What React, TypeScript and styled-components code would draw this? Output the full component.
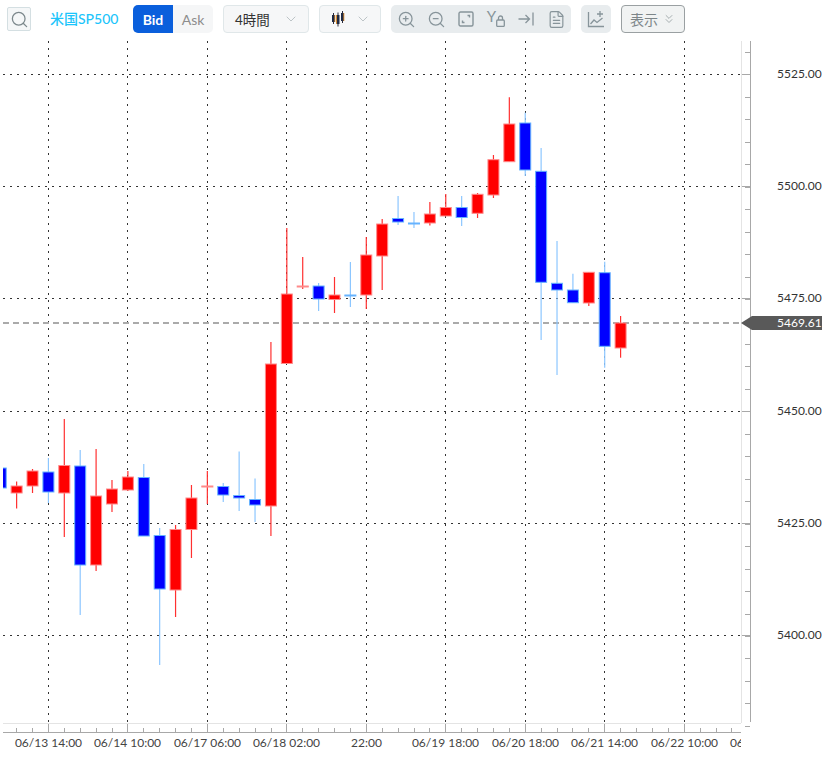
import styled, { createGlobalStyle } from "styled-components";
import { ChevronDown, ChevronsDown, FileText, Search, ZoomIn, ZoomOut } from "lucide-react";

const GlobalStyle = createGlobalStyle`
  html, body {
    margin: 0;
    padding: 0;
    background: #fff;
    font-family: Lato, "Noto Sans CJK JP", sans-serif;
  }
`;

const Page = styled.div`
  width: 824px;
  height: 757px;
  overflow: hidden;
  display: flex;
  flex-direction: column;
`;

const Toolbar = styled.div`
  height: 40px;
  flex: none;
  box-sizing: border-box;
  padding: 5px 0 0 7px;
  display: flex;
  align-items: flex-start;
  color: #8a9599;
`;

const SearchButton = styled.div`
  width: 24px;
  height: 24px;
  margin-top: 2px;
  box-sizing: border-box;
  border: 1px solid #d4dfe2;
  border-radius: 2px;
  background: #f5f7f8;
  display: flex;
  align-items: center;
  justify-content: center;
  color: #7c888c;
`;

const Title = styled.div`
  width: 83px;
  margin-left: 19px;
  height: 28px;
  line-height: 28px;
  font-size: 14px;
  font-weight: 500;
  color: #1cc5fb;
  white-space: nowrap;
`;

const Segment = styled.div`
  display: flex;
  width: 80px;
  height: 28px;
  border-radius: 5px;
  overflow: hidden;
  background: #f5f6f7;
`;

const SegmentItem = styled.div<{ $active?: boolean }>`
  width: 40px;
  display: flex;
  align-items: center;
  justify-content: center;
  font-size: 14px;
  font-weight: ${(p) => (p.$active ? 700 : 400)};
  background: ${(p) => (p.$active ? "#0a5fdc" : "transparent")};
  color: ${(p) => (p.$active ? "#fff" : "#8d8d8d")};
`;

const Select = styled.div<{ $width: number }>`
  width: ${(p) => p.$width}px;
  height: 28px;
  margin-left: 10px;
  box-sizing: border-box;
  padding: 0 9px 0 11px;
  border: 1px solid #e0e7e9;
  border-radius: 4px;
  background: #f6f7f8;
  display: flex;
  align-items: center;
  justify-content: space-between;
  font-size: 13.5px;
  color: #333;
  svg.chevron {
    color: #b4bcbf;
  }
`;

const IconGroup = styled.div`
  height: 28px;
  margin-left: 10px;
  border-radius: 5px;
  background: #e8ecee;
  display: flex;
`;

const IconButton = styled.div`
  width: 30px;
  height: 28px;
  display: flex;
  align-items: center;
  justify-content: center;
  color: #87949a;
`;

const AxisLetter = styled.span`
  font-size: 15px;
  line-height: 15px;
  margin-bottom: 5px;
`;

const LockSvg = styled.svg`
  margin-top: 3px;
`;

const ShowButton = styled.div`
  width: 64px;
  height: 28px;
  margin-left: 10px;
  box-sizing: border-box;
  border: 1px solid #9aa0a2;
  border-radius: 4px;
  background: #f1f3f3;
  display: flex;
  align-items: center;
  padding-left: 8px;
  gap: 4px;
  font-size: 14px;
  color: #7d8689;
  svg {
    color: #9aa3a6;
  }
`;

const ChartSvg = styled.svg`
  display: block;
  flex: none;
  font-family: Lato, sans-serif;
  font-size: 12px;
`;

// up/down, wick top, body top, body bottom, wick bottom
type Candle = [0 | 1, number, number, number, number];

const candles: Candle[] = [
  [0, 468, 468, 488, 488],
  [1, 481.5, 486, 493, 508.5],
  [1, 469, 471, 486, 493],
  [0, 458, 472, 492, 503],
  [1, 419, 465.5, 493, 537],
  [0, 450, 466, 565, 615],
  [1, 449, 496, 565, 571],
  [1, 480, 489, 504, 512],
  [1, 471, 477, 490, 491],
  [0, 464, 477.5, 536, 536],
  [0, 528, 535.5, 589, 665],
  [1, 525, 529.5, 590, 617],
  [1, 485, 498, 529.5, 558],
  [1, 471, 486, 487, 504],
  [0, 483, 486.5, 495, 502],
  [0, 451.5, 495.5, 498, 511],
  [0, 478.5, 499.5, 505, 522],
  [1, 342, 364, 506, 536],
  [1, 228, 294, 363.5, 363.5],
  [1, 257, 286, 287, 289],
  [0, 283, 286, 299, 311],
  [1, 277, 295, 299.5, 313],
  [0, 262, 295, 296, 307],
  [1, 237, 255, 295, 309],
  [1, 219, 224, 256, 290],
  [0, 196, 218.5, 222, 225],
  [0, 212, 223, 224, 228],
  [1, 202, 214, 223, 225.5],
  [1, 194, 207.5, 216, 216],
  [0, 196, 207.5, 217.5, 226],
  [1, 193, 194.3, 213.3, 218],
  [1, 155, 159.7, 195, 198],
  [1, 97.3, 124, 161.7, 161.7],
  [0, 112.7, 123, 170, 176],
  [0, 148, 171.3, 282.3, 340],
  [0, 241, 283.3, 290, 375],
  [0, 273.7, 290, 302.7, 303],
  [1, 272.3, 272.3, 303, 306],
  [0, 261.7, 272.7, 346.3, 367.7],
  [1, 316, 323, 348, 357.7],
];

const gridX = [48, 127, 207, 286, 366, 445, 525, 604, 684];
const gridY = [74, 186, 298, 411, 523, 635];
const priceLabels = ["5525.00", "5500.00", "5475.00", "5450.00", "5425.00", "5400.00"];
const timeLabels = [
  "06/13 14:00",
  "06/14 10:00",
  "06/17 06:00",
  "06/18 02:00",
  "22:00",
  "06/19 18:00",
  "06/20 18:00",
  "06/21 14:00",
  "06/22 10:00",
  "06/23 06:00",
];

const minorX = Array.from({ length: 46 }, (_, i) => Math.round(16.2 + i * 15.894));
const minorY = Array.from({ length: 31 }, (_, i) => Math.round(52 + i * 22.46));

function CandleChart() {
  return (
    <ChartSvg width={824} height={717} viewBox="0 40 824 717">
      <defs>
        <clipPath id="plot">
          <rect x={3} y={40} width={738} height={684} />
        </clipPath>
        <clipPath id="timeAxis">
          <rect x={0} y={733} width={741} height={24} />
        </clipPath>
      </defs>

      <g stroke="#333" strokeDasharray="2 5" fill="none">
        {gridX.map((x) => (
          <line key={x} x1={x + 0.5} y1={41} x2={x + 0.5} y2={723} />
        ))}
        {gridY.map((y) => (
          <line key={y} x1={3} y1={y + 0.5} x2={741} y2={y + 0.5} />
        ))}
      </g>

      <line x1={3} y1={323} x2={741} y2={323} stroke="#aaa" strokeWidth={2} strokeDasharray="6 4" />

      <g clipPath="url(#plot)">
        {candles.map(([up, wt, bt, bb, wb], i) => {
          const x = 0.73 + i * 15.894;
          return (
            <g key={i}>
              <line x1={x} y1={wt} x2={x} y2={wb} stroke={up ? "#ff3030" : "#8cc6ff"} strokeWidth={1.2} />
              <rect
                x={x - 5.5}
                y={bt}
                width={11}
                height={bb - bt}
                fill={up ? "#ff0000" : "#0000ff"}
                stroke={up ? "#ff8a8a" : "#66b3ff"}
                strokeWidth={1}
              />
            </g>
          );
        })}
      </g>

      <g stroke="#e4e4e4">
        <line x1={3} y1={723.5} x2={741} y2={723.5} />
        <line x1={741.5} y1={41} x2={741.5} y2={723} />
      </g>
      <g stroke="#a8a8a8">
        <line x1={3} y1={732.5} x2={741} y2={732.5} />
        <line x1={750.5} y1={41} x2={750.5} y2={722} />
        {minorX.map((x) => (
          <line key={x} x1={x + 0.5} y1={728} x2={x + 0.5} y2={732} />
        ))}
        {gridX.map((x) => (
          <line key={x} x1={x + 0.5} y1={724} x2={x + 0.5} y2={732} />
        ))}
        {minorY.map((y) => (
          <line key={y} x1={745} y1={y + 0.5} x2={750} y2={y + 0.5} />
        ))}
        {gridY.map((y) => (
          <line key={y} x1={742} y1={y + 0.5} x2={750} y2={y + 0.5} />
        ))}
      </g>

      <g fill="#333">
        {priceLabels.map((label, i) => (
          <text key={label} x={777} y={gridY[i] + 3.5}>
            {label}
          </text>
        ))}
      </g>

      <path d="M741 323 L752 316 L822 316 L822 330 L752 330 Z" fill="#595959" />
      <text x={777} y={327} fill="#fff">
        5469.61
      </text>

      <g fill="#444" textAnchor="middle" clipPath="url(#timeAxis)">
        {timeLabels.map((label, i) => (
          <text key={label} x={i < 9 ? gridX[i] + 0.5 : 763.5} y={747}>
            {label}
          </text>
        ))}
      </g>
    </ChartSvg>
  );
}

function CandleIcon() {
  return (
    <svg width={14} height={16} viewBox="0 0 14 16">
      <g stroke="#2a2a3a" strokeWidth={1}>
        <line x1={2.5} y1={2} x2={2.5} y2={13} />
        <line x1={7} y1={1.5} x2={7} y2={15.5} />
        <line x1={11.5} y1={0} x2={11.5} y2={12} />
      </g>
      <rect x={1} y={4} width={3} height={7} fill="#1f2a44" />
      <rect x={3.4} y={4} width={0.9} height={7} fill="#d98a2b" />
      <rect x={5.5} y={4} width={3} height={9} fill="#1f2a44" />
      <rect x={5} y={4} width={0.9} height={9} fill="#d98a2b" />
      <rect x={10} y={2} width={3} height={8} fill="#1f2a44" />
      <rect x={12.4} y={2} width={0.9} height={8} fill="#d98a2b" />
    </svg>
  );
}

function FrameIcon() {
  return (
    <svg width={16} height={16} viewBox="0 0 16 16" fill="none" stroke="currentColor" strokeWidth={1.4}>
      <rect x={1} y={1} width={14} height={14} rx={1.5} />
      <path d="M9.5 4.5 H11.5 V6.5 M6.5 11.5 H4.5 V9.5" />
    </svg>
  );
}

function LockIcon() {
  return (
    <LockSvg width={9} height={12} viewBox="0 0 9 12" fill="none" stroke="currentColor" strokeWidth={1.3}>
      <rect x={0.7} y={5} width={7.6} height={6.4} rx={1} />
      <path d="M2.5 5 V3 a2 2 0 0 1 4 0 V5" />
    </LockSvg>
  );
}

function JumpEndIcon() {
  return (
    <svg width={16} height={16} viewBox="0 0 16 16" fill="none" stroke="currentColor" strokeWidth={1.3}>
      <path d="M0.5 8 H11 M7.5 4 L11.5 8 L7.5 12" />
      <path d="M15 1.5 V14.5" />
    </svg>
  );
}

function ChartPlusIcon() {
  return (
    <svg width={18} height={18} viewBox="0 0 18 18" fill="none" stroke="currentColor" strokeWidth={1.3}>
      <path d="M1.5 2 V16.5 H17" />
      <path d="M3.5 14 L7 10 L10 12.5 L15.5 8" />
      <path d="M13 1 V7 M10 4 H16" />
    </svg>
  );
}

export default function App() {
  return (
    <Page>
      <GlobalStyle />
      <Toolbar>
        <SearchButton>
          <Search size={19} strokeWidth={1.6} />
        </SearchButton>
        <Title>米国SP500</Title>
        <Segment>
          <SegmentItem $active>Bid</SegmentItem>
          <SegmentItem>Ask</SegmentItem>
        </Segment>
        <Select $width={86}>
          4時間
          <ChevronDown className="chevron" size={16} strokeWidth={1.3} />
        </Select>
        <Select $width={62}>
          <CandleIcon />
          <ChevronDown className="chevron" size={16} strokeWidth={1.3} />
        </Select>
        <IconGroup>
          <IconButton>
            <ZoomIn size={19} strokeWidth={1.6} />
          </IconButton>
          <IconButton>
            <ZoomOut size={19} strokeWidth={1.6} />
          </IconButton>
          <IconButton>
            <FrameIcon />
          </IconButton>
          <IconButton>
            <AxisLetter>Y</AxisLetter>
            <LockIcon />
          </IconButton>
          <IconButton>
            <JumpEndIcon />
          </IconButton>
          <IconButton>
            <FileText size={19} strokeWidth={1.5} />
          </IconButton>
        </IconGroup>
        <IconGroup>
          <IconButton>
            <ChartPlusIcon />
          </IconButton>
        </IconGroup>
        <ShowButton>
          表示
          <ChevronsDown size={14} strokeWidth={1.5} />
        </ShowButton>
      </Toolbar>
      <CandleChart />
    </Page>
  );
}
